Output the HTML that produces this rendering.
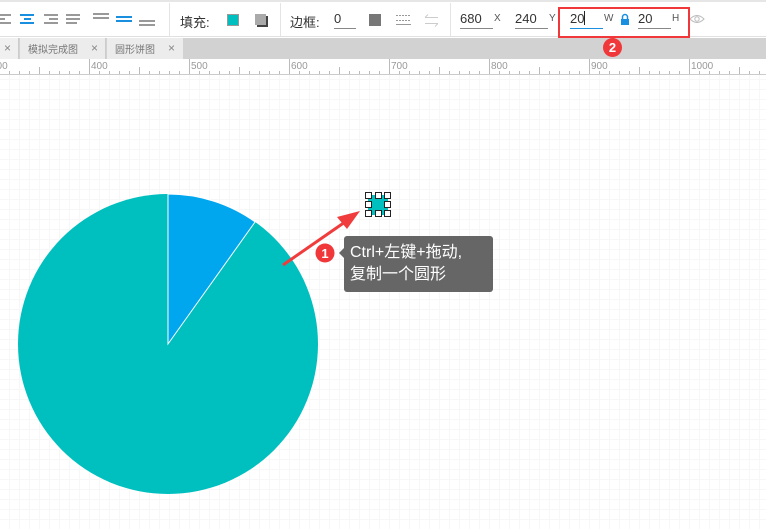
<!DOCTYPE html>
<html><head><meta charset="utf-8"><style>
*{margin:0;padding:0;box-sizing:border-box}
body{width:766px;height:529px;overflow:hidden;background:#fff;font-family:"Liberation Sans","Noto Sans CJK SC",sans-serif;position:relative}
.a{position:absolute}
.t{font-size:13px;color:#333}
.u{border-bottom:1px solid #888}
</style></head><body>
<!-- toolbar -->
<div class="a" style="left:0;top:0;width:766px;height:37px;background:#fff;border-top:2px solid #e6e6e6;border-bottom:1px solid #e0e0e0"></div>
<div class="a" style="left:169px;top:3px;width:1px;height:34px;background:#e4e4e4"></div>
<div class="a" style="left:280px;top:3px;width:1px;height:34px;background:#e4e4e4"></div>
<div class="a" style="left:450px;top:3px;width:1px;height:34px;background:#e4e4e4"></div>
<svg class="a" style="left:0;top:0" width="170" height="37">
<g fill="#999"><rect x="0" y="14" width="11" height="2"/><rect x="0" y="18" width="5" height="2"/><rect x="0" y="22" width="11" height="2"/></g>
<g fill="#1a8fe0"><rect x="20" y="14" width="14" height="2"/><rect x="24" y="18" width="7" height="2"/><rect x="20" y="22" width="14" height="2"/></g>
<g fill="#999"><rect x="44" y="14" width="14" height="2"/><rect x="49" y="18" width="9" height="2"/><rect x="44" y="22" width="14" height="2"/></g>
<g fill="#999"><rect x="66" y="14" width="14" height="2"/><rect x="66" y="18" width="14" height="2"/><rect x="66" y="22" width="11" height="2"/></g>
<g fill="#999"><rect x="93" y="13" width="16" height="2"/><rect x="93" y="17" width="16" height="2"/></g>
<g fill="#1a8fe0"><rect x="116" y="16" width="16" height="2"/><rect x="116" y="20" width="16" height="2"/></g>
<g fill="#999"><rect x="139" y="20" width="16" height="2"/><rect x="139" y="24" width="16" height="2"/></g>
</svg>
<div class="a t" style="left:180px;top:12px">填充:</div>
<div class="a" style="left:227px;top:14px;width:12px;height:12px;background:#00bfbf;border:1px solid #999"></div>
<div class="a" style="left:257px;top:16px;width:11px;height:11px;background:#444"></div>
<div class="a" style="left:255px;top:14px;width:11px;height:11px;background:#aaa"></div>
<div class="a t" style="left:290px;top:12px">边框:</div>
<div class="a t u" style="left:334px;top:11px;width:22px;height:18px">0</div>
<div class="a" style="left:369px;top:14px;width:12px;height:12px;background:#777"></div>
<svg class="a" style="left:395px;top:12px" width="50" height="16">
<g stroke="#999" stroke-width="1"><line x1="1" y1="3.5" x2="16" y2="3.5" stroke-dasharray="2 1"/><line x1="1" y1="8.5" x2="16" y2="8.5" stroke-dasharray="2 1"/><line x1="1" y1="12.5" x2="16" y2="12.5"/></g>
<g stroke="#ccc" stroke-width="1" fill="none"><path d="M30 5.5H43M30 5.5l3-3M30 11.5H43M43 11.5l-3 3"/></g>
</svg>
<div class="a t u" style="left:460px;top:11px;width:33px;height:18px">680</div>
<div class="a" style="left:494px;top:13px;font-size:10px;color:#555">X</div>
<div class="a t u" style="left:515px;top:11px;width:33px;height:18px">240</div>
<div class="a" style="left:549px;top:13px;font-size:10px;color:#555">Y</div>
<div class="a t" style="left:570px;top:11px;width:33px;height:18px;border-bottom:1px solid #1a8fe0">20<span style="display:inline-block;width:1px;height:14px;background:#222;vertical-align:-2px"></span></div>
<div class="a" style="left:604px;top:13px;font-size:10px;color:#555">W</div>
<svg class="a" style="left:620px;top:13px" width="10" height="12"><path d="M2.5 6V4a2.5 2.5 0 0 1 5 0V6" stroke="#1a8fe0" stroke-width="1.5" fill="none"/><rect x="1" y="6" width="8" height="6" fill="#1a8fe0"/></svg>
<div class="a t u" style="left:638px;top:11px;width:33px;height:18px">20</div>
<div class="a" style="left:672px;top:13px;font-size:10px;color:#555">H</div>
<svg class="a" style="left:689px;top:13px" width="16" height="12"><path d="M1 6Q8 -1 15 6Q8 13 1 6Z" stroke="#bbb" fill="none"/><circle cx="8" cy="6" r="2.2" stroke="#bbb" fill="none"/></svg>
<div class="a" style="left:558px;top:7px;width:132px;height:31px;border:2px solid #f0373a"></div>
<!-- tabs -->
<div class="a" style="left:0;top:38px;width:766px;height:21px;background:#d2d2d2"></div>
<div class="a" style="left:0;top:38px;width:19px;height:21px;background:#f0f0f0;border-right:1px solid #ccc"></div>
<div class="a" style="left:4px;top:41px;font-size:12px;color:#888">×</div>
<div class="a" style="left:20px;top:38px;width:86px;height:21px;background:#ececec;border-right:1px solid #ccc"></div>
<div class="a" style="left:28px;top:41px;font-size:10px;color:#777">模拟完成图</div>
<div class="a" style="left:91px;top:41px;font-size:12px;color:#888">×</div>
<div class="a" style="left:107px;top:38px;width:76px;height:21px;background:#ececec"></div>
<div class="a" style="left:115px;top:41px;font-size:10px;color:#777">圆形饼图</div>
<div class="a" style="left:168px;top:41px;font-size:12px;color:#888">×</div>
<div class="a" style="left:603px;top:38px;width:19px;height:19px;border-radius:50%;background:#f0373a;color:#fff;font-size:13px;font-weight:bold;text-align:center;line-height:19px">2</div>
<!-- ruler + canvas -->
<div class="a" style="left:0;top:75px;width:766px;height:454px;background-color:#fff;background-image:linear-gradient(to right,#f7f7f7 1px,transparent 1px),linear-gradient(to bottom,#f7f7f7 1px,transparent 1px);background-size:10px 10px;background-position:9px 4px"></div>
<svg class="a" style="left:0;top:59px" width="766" height="16">
<defs><pattern id="r" x="-11" y="0" width="100" height="16" patternUnits="userSpaceOnUse">
<g stroke="#bbb" stroke-width="1"><line x1="0.5" y1="0" x2="0.5" y2="16"/>
<line x1="10.5" y1="12" x2="10.5" y2="16"/><line x1="20.5" y1="12" x2="20.5" y2="16"/><line x1="30.5" y1="12" x2="30.5" y2="16"/><line x1="40.5" y1="12" x2="40.5" y2="16"/><line x1="50.5" y1="8" x2="50.5" y2="16"/><line x1="60.5" y1="12" x2="60.5" y2="16"/><line x1="70.5" y1="12" x2="70.5" y2="16"/><line x1="80.5" y1="12" x2="80.5" y2="16"/><line x1="90.5" y1="12" x2="90.5" y2="16"/></g></pattern></defs>
<rect width="766" height="16" fill="#fff"/><rect width="766" height="16" fill="url(#r)"/>
<line x1="0" y1="15.5" x2="766" y2="15.5" stroke="#ccc"/>
<g font-size="10" fill="#999" font-family="Liberation Sans,sans-serif"><text x="-9" y="10">300</text><text x="91" y="10">400</text><text x="191" y="10">500</text><text x="291" y="10">600</text><text x="391" y="10">700</text><text x="491" y="10">800</text><text x="591" y="10">900</text><text x="691" y="10">1000</text></g>
</svg>
<!-- pie -->
<svg class="a" style="left:0;top:0" width="766" height="529">
<circle cx="168" cy="344" r="150" fill="#00bfbf"/>
<path d="M168 344V194A150 150 0 0 1 255.1 221.9Z" fill="#00a6ee" stroke="#fff" stroke-width="1"/>
<line x1="283" y1="265" x2="345" y2="222" stroke="#f03c3c" stroke-width="3"/>
<path d="M360 211L337 217L347 229Z" fill="#f03c3c"/>
<rect x="368" y="195" width="20" height="20" fill="#00bfbf"/>
<g fill="#fff" stroke="#222" stroke-width="1">
<rect x="365.5" y="192.5" width="6" height="6"/><rect x="375.5" y="192.5" width="6" height="6"/><rect x="384.5" y="192.5" width="6" height="6"/>
<rect x="365.5" y="201.5" width="6" height="6"/><rect x="384.5" y="201.5" width="6" height="6"/>
<rect x="365.5" y="210.5" width="6" height="6"/><rect x="375.5" y="210.5" width="6" height="6"/><rect x="384.5" y="210.5" width="6" height="6"/></g>
<circle cx="325" cy="253" r="9.5" fill="#f0373a"/>
<text x="325" y="258" text-anchor="middle" fill="#fff" font-size="13" font-weight="bold" font-family="Liberation Sans,sans-serif">1</text>
<path d="M344 248L339 253L344 258Z" fill="#666"/>
<rect x="344" y="236" width="149" height="56" rx="3" fill="#666"/>
</svg>
<div class="a" style="left:350px;top:242px;font-size:16px;color:#fff;line-height:22px">Ctrl+左键+拖动,<br>复制一个圆形</div>
</body></html>
